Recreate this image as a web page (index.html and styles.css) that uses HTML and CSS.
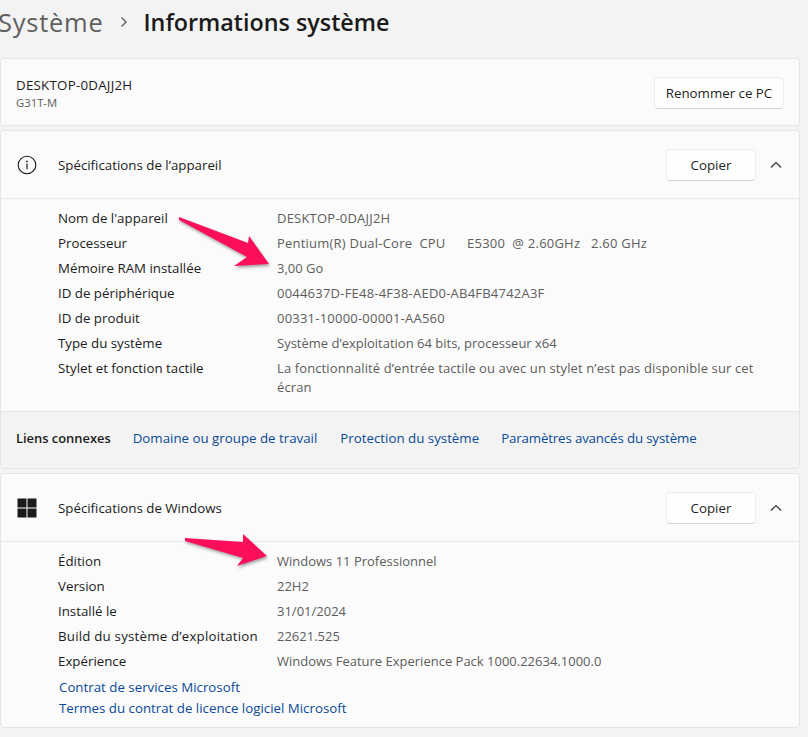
FILE: index.html
```html
<!DOCTYPE html>
<html lang="fr">
    <head>
        <title>Informations système</title>
        <meta charset="UTF-8">
        <link rel="stylesheet" href="styles.css">
    </head>
    <body>
        <div id="main">

            <h1 class="crumb">
                <span class="crumbParent">Système</span>
                <svg class="crumbSep" width="10" height="12" viewBox="0 0 10 12"><path d="M2.5 1.5 L7 6 L2.5 10.5" fill="none" stroke="#5c5c5c" stroke-width="1.4"/></svg>
                <span class="crumbTitle">Informations système</span>
            </h1>

            <div class="card pcCard">
                <div>
                    <div class="pcName">DESKTOP-0DAJJ2H</div>
                    <div class="pcModel">G31T-M</div>
                </div>
                <div class="btn btnRename">Renommer ce PC</div>
            </div>

            <div class="card specCard">
                <div class="specHead">
                    <svg class="specIcon" width="20" height="20" viewBox="0 0 20 20"><circle cx="10" cy="10" r="8.8" fill="none" stroke="#1b1b1b" stroke-width="1.1"/><rect x="9.4" y="8.6" width="1.2" height="5.6" fill="#1b1b1b"/><circle cx="10" cy="6.4" r=".85" fill="#1b1b1b"/></svg>
                    <div class="specTitle">Spécifications de l’appareil</div>
                    <div class="btn btnCopy">Copier</div>
                    <svg class="chevron" width="12" height="8" viewBox="0 0 12 8"><path d="M1 6.5 L6 1.5 L11 6.5" fill="none" stroke="#333" stroke-width="1.2"/></svg>
                </div>
                <div class="specBody devBody">
                    <div class="row"><div class="key">Nom de l'appareil</div><div class="val caps">DESKTOP-0DAJJ2H</div></div>
                    <div class="row"><div class="key">Processeur</div><div class="val caps">Pentium(R) Dual-Core&nbsp; CPU&nbsp; &nbsp; &nbsp; E5300&nbsp; @ 2.60GHz&nbsp; &nbsp;2.60 GHz</div></div>
                    <div class="row"><div class="key">Mémoire RAM installée</div><div class="val">3,00 Go</div></div>
                    <div class="row"><div class="key">ID de périphérique</div><div class="val caps">0044637D-FE48-4F38-AED0-AB4FB4742A3F</div></div>
                    <div class="row"><div class="key">ID de produit</div><div class="val caps">00331-10000-00001-AA560</div></div>
                    <div class="row"><div class="key">Type du système</div><div class="val">Système d’exploitation 64 bits, processeur x64</div></div>
                    <div class="row"><div class="key">Stylet et fonction tactile</div><div class="val valWrap">La fonctionnalité d’entrée tactile ou avec un stylet n’est pas disponible sur cet écran</div></div>
                </div>
                <div class="related">
                    <div class="relatedTitle">Liens connexes</div>
                    <a class="link">Domaine ou groupe de travail</a>
                    <a class="link">Protection du système</a>
                    <a class="link linkTight">Paramètres avancés du système</a>
                </div>
            </div>

            <div class="card specCard">
                <div class="specHead">
                    <svg class="specIcon" width="20" height="20" viewBox="0 0 20 20"><path d="M0.5 0.5h9v9h-9zM10.5 0.5h9v9h-9zM0.5 10.5h9v9h-9zM10.5 10.5h9v9h-9z" fill="#1b1b1b"/></svg>
                    <div class="specTitle">Spécifications de Windows</div>
                    <div class="btn btnCopy">Copier</div>
                    <svg class="chevron" width="12" height="8" viewBox="0 0 12 8"><path d="M1 6.5 L6 1.5 L11 6.5" fill="none" stroke="#333" stroke-width="1.2"/></svg>
                </div>
                <div class="specBody winBody">
                    <div class="row"><div class="key">Édition</div><div class="val">Windows 11 Professionnel</div></div>
                    <div class="row"><div class="key">Version</div><div class="val">22H2</div></div>
                    <div class="row"><div class="key">Installé le</div><div class="val">31/01/2024</div></div>
                    <div class="row"><div class="key wideKey">Build du système d’exploitation</div><div class="val">22621.525</div></div>
                    <div class="row"><div class="key">Expérience</div><div class="val">Windows Feature Experience Pack 1000.22634.1000.0</div></div>
                    <a class="link docLink firstDoc">Contrat de services Microsoft</a>
                    <a class="link docLink">Termes du contrat de licence logiciel Microsoft</a>
                </div>
            </div>

        </div>

        <svg class="arrows" width="808" height="737" viewBox="0 0 808 737">
            <path d="M179 217 L248 243 L249 236 L269 264 L234 266 L247 257 L179 220 Z"/>
            <path d="M185 538 L243 542 L243 534 L267 556 L237 566 L243 558 L185 541 Z"/>
        </svg>
    </body>
</html>
```

FILE: styles.css
```css
html, body {
    margin: 0;
    padding: 0;
}

body {
    background-color: #f3f3f3;
    font-family: "Open Sans", "Liberation Sans", sans-serif;
    font-size: 13.3px;
    color: #1b1b1b;
    width: 808px;
    height: 737px;
    overflow: hidden;
    position: relative;
}

#main {
    width: 800px;
}

.crumb {
    display: flex;
    align-items: center;
    margin: 0;
    height: 58px;
    box-sizing: border-box;
    padding-bottom: 14px;
    font-size: 25.5px;
    font-weight: 600;
    color: #1a1a1a;
    white-space: nowrap;
}

.crumbParent {
    color: #5f5f5f;
    margin-left: -2px;
    font-weight: 500;
    letter-spacing: .75px;
}

.crumbSep {
    margin: 0 15px 0 15px;
}

.crumbTitle {
    font-size: 23.3px;
}

.card {
    background-color: #fbfbfb;
    border: 1px solid #e5e5e5;
    border-radius: 4px;
    margin-bottom: 4px;
    box-sizing: border-box;
    overflow: hidden;
}

.pcCard {
    display: flex;
    align-items: center;
    justify-content: space-between;
    height: 68px;
    padding: 2px 15px 0;
}

.pcName {
    line-height: 18px;
    letter-spacing: .25px;
}

.pcModel {
    font-size: 11.3px;
    line-height: 17px;
    color: #5d5d5d;
}

.btn {
    display: flex;
    align-items: center;
    justify-content: center;
    box-sizing: border-box;
    height: 32px;
    background-color: #fefefe;
    border: 1px solid #ececec;
    border-bottom-color: #d3d3d3;
    border-radius: 4px;
    color: #1f1f1f;
}

.btnRename {
    width: 130px;
}

.btnCopy {
    width: 90px;
}

.specHead {
    display: flex;
    align-items: center;
    height: 67px;
    padding: 0 16px;
    border-bottom: 1px solid #e9e9e9;
}

.specIcon {
    margin-right: 21px;
}

.specTitle {
    flex: 1;
}

.chevron {
    margin: 0 1px 0 14px;
}

.specBody {
    padding: 7px 16px 0 57px;
}

.devBody {
    padding-bottom: 8px;
}

.row {
    display: flex;
    line-height: 25px;
}

.key {
    width: 219px;
    flex-shrink: 0;
}

.wideKey {
    letter-spacing: .2px;
    white-space: nowrap;
}

.val {
    font-size: 13px;
    color: #5d5d5d;
}

.caps {
    letter-spacing: .22px;
}

.valWrap {
    width: 485px;
    line-height: 19px;
    padding: 3px 0 6px;
    letter-spacing: .12px;
}

.related {
    display: flex;
    align-items: center;
    gap: 23px;
    height: 52px;
    padding: 0 15px 4px;
    background-color: #f3f3f3;
    border-top: 1px solid #e5e5e5;
}

.relatedTitle {
    font-size: 12.9px;
    font-weight: 600;
    margin-right: -1px;
}

.link {
    color: #0a4a96;
}

.linkTight {
    margin-left: -1px;
    letter-spacing: -.15px;
}

.winBody {
    padding-bottom: 8px;
}

.docLink {
    display: block;
    line-height: 21px;
    margin-left: 1px;
}

.firstDoc {
    margin-top: 3px;
}

.arrows {
    position: absolute;
    left: 0;
    top: 0;
    pointer-events: none;
}

.arrows path {
    fill: #fb0f5a;
    filter: drop-shadow(1px 2px 1.5px rgba(0, 0, 0, .35));
}
```
